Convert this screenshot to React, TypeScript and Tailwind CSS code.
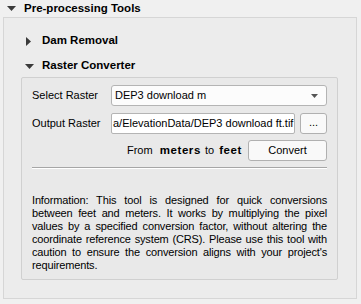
import React from 'react';

const font = { fontFamily: '"Liberation Sans", Arial, sans-serif' };

function TriDown({ className = '' }: { className?: string }) {
  return (
    <svg width="9" height="5" viewBox="0 0 9 5" className={className}>
      <polygon points="0,0 9,0 4.5,5" fill="#3a3a3a" />
    </svg>
  );
}

function TriRight({ className = '' }: { className?: string }) {
  return (
    <svg width="5" height="9" viewBox="0 0 5 9" className={className}>
      <polygon points="0,0 5,4.5 0,9" fill="#3a3a3a" />
    </svg>
  );
}

const infoLines = [
  'Information: This tool is designed for quick conversions',
  'between feet and meters. It works by multiplying the pixel',
  'values by a specified conversion factor, without altering the',
  'coordinate reference system (CRS). Please use this tool with',
  "caution to ensure the conversion aligns with your project's",
];

export default function App() {
  return (
    <div
      className="w-[361px] h-[304px] overflow-hidden bg-[#f0f0f0] text-[11px] text-black"
      style={font}
    >
      {/* Section header */}
      <div className="h-[17px] flex items-center pl-[7px]">
        <TriDown />
        <span className="ml-[8px] font-bold text-[11.5px]">Pre-processing Tools</span>
      </div>

      {/* Collapsible body */}
      <div className="ml-[3px] w-[354px] h-[282px] border border-[#d6d6d6] bg-[#ececec] flex flex-col">
        <div className="h-[20px] mt-[13px] flex items-center pl-[22px]">
          <TriRight />
          <span className="ml-[11px] font-bold text-[11.5px]">Dam Removal</span>
        </div>
        <div className="h-[20px] mt-[5px] flex items-center pl-[21px]">
          <TriDown />
          <span className="ml-[8px] font-bold text-[11.5px]">Raster Converter</span>
        </div>

        {/* Raster converter group */}
        <div className="ml-[17px] mt-[1px] w-[317px] h-[203px] border border-[#d0d0d0] rounded-[2px] bg-[#e9e9e9] flex flex-col pl-[10px] pr-[10px]">
          <div className="mt-[7px] h-[21px] flex items-center">
            <span className="w-[79px]">Select Raster</span>
            <div className="flex-1 h-[21px] border border-[#b4b4b4] rounded-[3px] bg-[#fcfcfc] flex items-center pl-[3px] pr-[8px]">
              <span className="flex-1">DEP3 download m</span>
              <svg width="7" height="4" viewBox="0 0 7 4">
                <polygon points="0,0 7,0 3.5,4" fill="#555" />
              </svg>
            </div>
          </div>

          <div className="mt-[7px] h-[21px] flex items-center">
            <span className="w-[79px]">Output Raster</span>
            <div className="w-[184px] h-[21px] border border-[#b4b4b4] rounded-[2px] bg-white flex items-center overflow-hidden whitespace-nowrap">
              <span className="pl-[1px]">a/ElevationData/DEP3 download ft.tif</span>
            </div>
            <div className="ml-[5px] flex-1 h-[21px] border border-[#b0b0b0] rounded-[3px] bg-[#f9f9f9] flex items-center justify-center pb-[2px]">
              ...
            </div>
          </div>

          <div className="mt-[6px] h-[21px] flex items-center justify-end">
            <span>From</span>
            <span className="ml-[7px] font-bold text-[11.5px] tracking-[0.6px]">meters</span>
            <span className="ml-[4px]">to</span>
            <span className="ml-[5px] font-bold text-[11.5px] tracking-[0.6px]">feet</span>
            <div className="ml-[6px] w-[79px] h-[21px] border border-[#b0b0b0] rounded-[3px] bg-[#f9f9f9] flex items-center justify-center">
              Convert
            </div>
          </div>

          <div className="mt-[6px] h-[1px] bg-[#a6a6a6]" />
          <div className="h-[1px] bg-white" />

          <div className="mt-[25px] flex flex-col leading-[13px] tracking-[-0.15px]">
            {infoLines.map((line) => (
              <div key={line} className="whitespace-nowrap text-justify [text-align-last:justify]">
                {line}
              </div>
            ))}
            <div>requirements.</div>
          </div>
        </div>
      </div>
    </div>
  );
}
